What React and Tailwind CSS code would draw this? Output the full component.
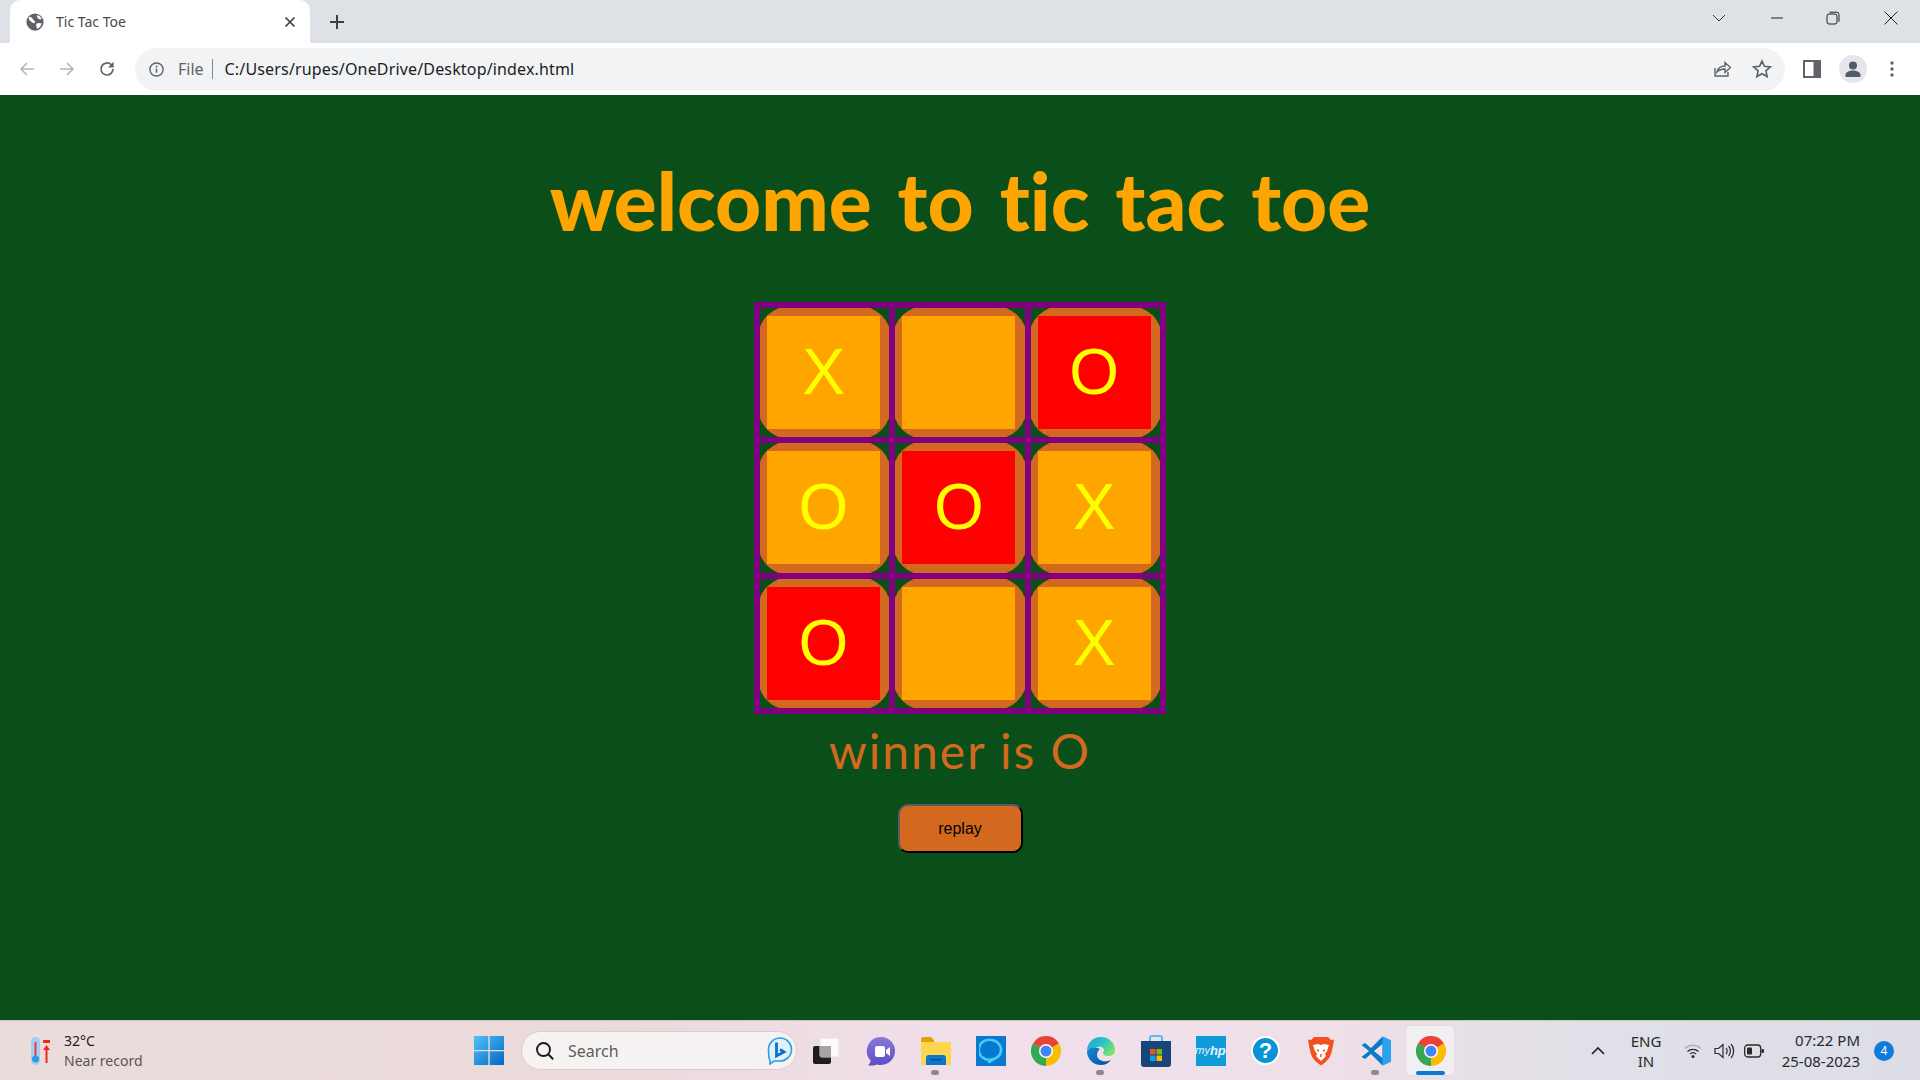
import React from "react";

const Cell = ({ v, red }) => (
  <div className="h-full w-full overflow-hidden bg-[#0a4f19]">
    <div className={"-m-[2px] flex h-[calc(100%+4px)] w-[calc(100%+4px)] items-center rounded-[32px] bg-[#d2691e] pl-[9px]"}>
      <div className={"flex h-[113px] w-[113px] items-center justify-center pb-[1px] font-['Liberation_Sans',sans-serif] text-[64px] leading-none text-[#ffff00] " + (red ? "bg-[#ff0000]" : "bg-[#ffa500]")}>
        {v}
      </div>
    </div>
  </div>
);

const Chrome = ({ s = 30 }) => (
  <svg className="relative" width={s} height={s} viewBox="0 0 24 24">
    <path d="M12 12L1.6 6A12 12 0 0 1 22.4 6Z" fill="#ea4335" />
    <path d="M12 12L22.4 6A12 12 0 0 1 12 24Z" fill="#fbbc05" />
    <path d="M12 12L12 24A12 12 0 0 1 1.6 6Z" fill="#34a853" />
    <circle cx="12" cy="12" r="5.6" fill="#fff" />
    <circle cx="12" cy="12" r="4.4" fill="#4285f4" />
  </svg>
);

const Slot = ({ children, dot, active }) => (
  <div className="relative flex h-[55px] w-[55px] shrink-0 items-center justify-center">
    {active && <div className="absolute left-[3px] top-[3px] h-[49px] w-[48px] rounded-[4px] bg-[#f1eff2] shadow-[0_0_1px_#bbb]" />}
    {children}
    {dot && <div className="absolute bottom-[3px] left-[23px] h-[5px] w-[8px] rounded-full bg-[#8a8a8f]" />}
    {active && <div className="absolute bottom-[3px] left-[13px] h-[4px] w-[29px] rounded-full bg-[#0a78d4]" />}
  </div>
);

export default function App() {
  return (
    <div className="flex h-[1080px] w-[1920px] flex-col overflow-hidden font-['Noto_Sans',sans-serif]">
      {/* tab strip */}
      <div className="flex h-[43px] shrink-0 items-end bg-[#dee1e6] pl-[10px]">
        <div className="flex h-[43px] w-[300px] items-center rounded-t-[10px] bg-white pl-[16px] pr-[12px]">
          <svg width="18" height="18" viewBox="0 0 24 24">
            <circle cx="12" cy="12" r="11.5" fill="#5f6368" />
            <path d="M4 5c3 0 4 1 5 3s3 2 3 4-2 2-3 1-3-2-4-3-2-3-1-5ZM15 3c2 0 5 2 6 5-2 1-4 0-5-1s-2-3-1-4ZM14 14c2-1 5-1 7 0-1 3-3 6-6 7-1-2-2-5-1-7Z" fill="#fff" />
          </svg>
          <span className="ml-[12px] text-[14px] text-[#45494d]">Tic Tac Toe</span>
          <svg className="ml-auto" width="16" height="16" viewBox="0 0 16 16">
            <path d="M3.5 3.5l9 9M12.5 3.5l-9 9" stroke="#3c4043" strokeWidth="1.7" />
          </svg>
        </div>
        <div className="ml-[19px] flex h-[43px] items-center">
          <svg width="16" height="16" viewBox="0 0 16 16">
            <path d="M8 1v14M1 8h14" stroke="#3c4043" strokeWidth="2" />
          </svg>
        </div>
        <div className="ml-auto flex h-[36px] items-center self-start">
          <svg className="mr-[44px]" width="14" height="14" viewBox="0 0 14 14"><path d="M1 4l6 6 6-6" fill="none" stroke="#3c4043" strokeWidth="1" /></svg>
          <svg className="mr-[42px]" width="14" height="14" viewBox="0 0 14 14"><path d="M1 7h12" stroke="#202124" strokeWidth="1" /></svg>
          <svg className="mr-[44px]" width="14" height="14" viewBox="0 0 14 14"><rect x="1" y="3" width="10" height="10" rx="2" fill="none" stroke="#202124" /><path d="M3.5 1.2h7a2.5 2.5 0 0 1 2.5 2.5v7" fill="none" stroke="#202124" /></svg>
          <svg className="mr-[22px]" width="14" height="14" viewBox="0 0 14 14"><path d="M.5.5l13 13M13.5.5l-13 13" stroke="#202124" strokeWidth="1" /></svg>
        </div>
      </div>
      {/* toolbar */}
      <div className="flex h-[52px] shrink-0 items-center bg-white">
        <svg className="ml-[18px]" width="18" height="18" viewBox="0 0 18 18"><path d="M16 9H3M9 3L3 9l6 6" fill="none" stroke="#b3b6ba" strokeWidth="1.6" /></svg>
        <svg className="ml-[22px]" width="18" height="18" viewBox="0 0 18 18"><path d="M2 9h13M9 3l6 6-6 6" fill="none" stroke="#b3b6ba" strokeWidth="1.6" /></svg>
        <svg className="ml-[22px]" width="18" height="18" viewBox="0 0 18 18"><path d="M15 9a6 6 0 1 1-1.8-4.3L15 6.5" fill="none" stroke="#5f6368" strokeWidth="1.7" /><path d="M15.6 1.8v5.6H10z" fill="#5f6368" /></svg>
        <div className="ml-[19px] flex h-[43px] w-[1650px] items-center rounded-full bg-[#f1f3f4] pl-[14px]">
          <svg width="15" height="15" viewBox="0 0 16 16"><circle cx="8" cy="8" r="7" fill="none" stroke="#5f6368" strokeWidth="1.5" /><path d="M8 7v4.5" stroke="#5f6368" strokeWidth="1.6" /><circle cx="8" cy="4.8" r="1" fill="#5f6368" /></svg>
          <span className="ml-[14px] text-[16px] text-[#5f6368]">File</span>
          <div className="ml-[8px] h-[20px] w-[1px] bg-[#80868b]" />
          <span className="ml-[12px] text-[16px] tracking-[0.16px] text-[#202124]">C:/Users/rupes/OneDrive/Desktop/index.html</span>
          <svg className="ml-auto" width="20" height="20" viewBox="0 0 20 20"><path d="M3 9v8h13v-4M5 13c1-4 4-6 8-6V3.5l5.5 5-5.5 5V10c-3 0-6 1-8 3Z" fill="none" stroke="#5f6368" strokeWidth="1.4" /></svg>
          <svg className="ml-[20px] mr-[13px]" width="20" height="20" viewBox="0 0 24 24"><path d="M12 2.5l2.9 6.3 6.9.8-5.1 4.7 1.4 6.8-6.1-3.4-6.1 3.4 1.4-6.8-5.1-4.7 6.9-.8Z" fill="none" stroke="#5f6368" strokeWidth="2" /></svg>
        </div>
        <svg className="ml-[18px]" width="18" height="18" viewBox="0 0 18 18"><rect x="0" y="0" width="18" height="18" fill="#5f6368" /><rect x="2" y="2" width="8.5" height="14" fill="#fff" /></svg>
        <div className="ml-[18px] flex h-[28px] w-[28px] items-center justify-center rounded-full bg-[#e4e6ea]">
          <svg width="18" height="18" viewBox="0 0 18 18"><circle cx="9" cy="5.5" r="4" fill="#515a6e" /><path d="M1.5 17v-2c0-3 4-4.5 7.500-4.500s7.500 1.500 7.500 4.500v2Z" fill="#515a6e" /></svg>
        </div>
        <svg className="ml-[22px]" width="6" height="18" viewBox="0 0 6 18"><circle cx="3" cy="3" r="1.700" fill="#5f6368" /><circle cx="3" cy="9" r="1.700" fill="#5f6368" /><circle cx="3" cy="15" r="1.700" fill="#5f6368" /></svg>
      </div>
      {/* page */}
      <main className="flex h-[925px] shrink-0 flex-col items-center bg-[#0a4f19]">
        <h1 className="mt-[59px] h-[92px] text-center font-['Lato',sans-serif] text-[80px] font-black leading-[92px] text-[#ffa500] [font-variant-ligatures:none] [word-spacing:7px]">welcome to tic tac toe</h1>
        <div className="mt-[56px] grid h-[412px] w-[412px] grid-cols-3 grid-rows-3 gap-[6px] border-[6px] border-[#800080] bg-[#800080]">
          <Cell v="X" />
          <Cell v="" />
          <Cell v="O" red />
          <Cell v="O" />
          <Cell v="O" red />
          <Cell v="X" />
          <Cell v="O" red />
          <Cell v="" />
          <Cell v="X" />
        </div>
        <div className="mt-[9px] h-[56px] font-['Lato',sans-serif] text-[48px] leading-[56px] tracking-[2px] text-[#d2691e]">winner is O</div>
        <button className="mt-[25px] h-[49px] w-[125px] rounded-[10px] border-2 border-b-black border-l-[#5a5a64] border-r-black border-t-[#5a5a64] bg-[#d2691e] font-['Liberation_Sans',sans-serif] text-[16px] text-black">replay</button>
      </main>
      {/* taskbar */}
      <footer className="flex h-[60px] shrink-0 items-center border-t border-t-[#c9c5c5] bg-[linear-gradient(90deg,#ebdcdc_0%,#eadada_30%,#f1e0ec_52%,#eedfe8_70%,#dfe0e8_85%,#dcdde6_100%)]">
        <svg className="ml-[30px]" width="22" height="30" viewBox="0 0 22 30">
          <rect x="1" y="1" width="9" height="28" rx="4.500" fill="#a5cdf0" />
          <rect x="4.600" y="6" width="1.800" height="14" fill="#e8342a" />
          <circle cx="5.500" cy="23" r="3.500" fill="#2f9be8" />
          <rect x="13" y="4" width="7" height="3" fill="#f0291c" />
          <path d="M16.500 9l3.500 5h-2.500v13h-2V14H13Z" fill="#f0291c" />
        </svg>
        <div className="ml-[12px] w-[100px] text-[14px] leading-[20px]">
          <div className="text-[#1d1d1d]">32°C</div>
          <div className="text-[#555]">Near record</div>
        </div>
        <svg className="ml-[310px]" width="30" height="29" viewBox="0 0 30 29">
          <defs><linearGradient id="w" x1="0" y1="0" x2="1" y2="1"><stop offset="0" stopColor="#4fc3f7" /><stop offset="1" stopColor="#0566c4" /></linearGradient></defs>
          <path d="M0 0h14.300v14H0zM15.700 0H30v14H15.700zM0 15.300h14.300V29H0zM15.700 15.300H30V29H15.700z" fill="url(#w)" />
        </svg>
        <div className="ml-[17px] flex h-[39px] w-[276px] items-center rounded-full border border-[#d8ccd0] bg-[#f7f2f2] pl-[13px]">
          <svg width="20" height="20" viewBox="0 0 20 20"><circle cx="8.500" cy="8.500" r="6.500" fill="none" stroke="#1a1a1a" strokeWidth="1.900" /><path d="M13.200 13.200l5 5" stroke="#1a1a1a" strokeWidth="2" /></svg>
          <span className="ml-[13px] text-[16px] text-[#5c5c5c]">Search</span>
          <svg className="ml-auto mr-[3px]" width="26" height="30" viewBox="0 0 26 30">
            <path d="M13 2a11.500 11.500 0 0 1 0 23H7l-4 3v-3.500C1.500 22 1.500 18 1.500 13.500A11.500 11.500 0 0 1 13 2Z" fill="#dff2fb" stroke="#2b9be8" strokeWidth="1.600" />
            <path d="M9.500 6.500v13.500l7.500-4-4-2.500" fill="none" stroke="#0a6fd0" strokeWidth="2.800" />
          </svg>
        </div>
        <div className="ml-[-2px] flex items-center pl-[3px]">
          <Slot>
            <svg width="28" height="28" viewBox="0 0 28 28">
              <rect x="1" y="9" width="18" height="18" rx="2" fill="#1d1d1d" />
              <rect x="8" y="1" width="19" height="19" rx="1.500" fill="#ffffff" fillOpacity="0.85" stroke="#e6e0e4" />
              <rect x="8" y="9" width="11" height="11" fill="#a5a5a5" />
            </svg>
          </Slot>
          <Slot>
            <svg width="30" height="30" viewBox="0 0 30 30">
              <defs><linearGradient id="m" x1="0" y1="0" x2="0" y2="1"><stop offset="0" stopColor="#8b78d8" /><stop offset="1" stopColor="#5a4fc8" /></linearGradient></defs>
              <path d="M15 1a14 14 0 1 1-4 27.400C8 29.500 5 29.800 2 29.500c1.500-1.500 2.400-3 2.600-5A14 14 0 0 1 15 1Z" fill="url(#m)" />
              <rect x="9" y="10" width="10" height="11" rx="2" fill="#fff" />
              <path d="M20 14l4-3v9l-4-3Z" fill="#fff" />
            </svg>
          </Slot>
          <Slot dot>
            <svg width="30" height="30" viewBox="0 0 30 30">
              <path d="M0 3a2 2 0 0 1 2-2h8l3 3v4H0Z" fill="#e0a10d" />
              <path d="M0 6h30v22a1 1 0 0 1-1 1H1a1 1 0 0 1-1-1Z" fill="#fdd64e" />
              <path d="M5 22a3 3 0 0 1 3-3h14a3 3 0 0 1 3 3v7H5Z" fill="#0b76c8" />
              <rect x="10" y="23" width="10" height="1.500" fill="#0a4a80" />
            </svg>
          </Slot>
          <Slot>
            <div className="flex h-[30px] w-[30px] items-center justify-center bg-[#0a78d0]">
              <svg width="24" height="26" viewBox="0 0 24 26">
                <path d="M12 2a10 10 0 1 0 0 19.500L9.500 24.500 16 20.500C20 19 22 15.500 22 12A10 10 0 0 0 12 2Z" fill="none" stroke="#3fd0f5" strokeWidth="2.600" />
              </svg>
            </div>
          </Slot>
          <Slot><Chrome /></Slot>
          <Slot dot>
            <svg width="30" height="30" viewBox="0 0 30 30">
              <defs>
                <linearGradient id="e" x1="0" y1="0" x2="1" y2="0.600"><stop offset="0" stopColor="#1a9fe0" /><stop offset="0.600" stopColor="#2fc8c0" /><stop offset="1" stopColor="#7fe06a" /></linearGradient>
                <linearGradient id="e2" x1="0" y1="0" x2="1" y2="1"><stop offset="0" stopColor="#1688d8" /><stop offset="1" stopColor="#0c4f98" /></linearGradient>
              </defs>
              <path d="M1 15C1 7 7 1 15 1c8 0 14 6 14 13 0 4-3 6-7 6-3 0-5-1-5-3 0-1 1-1.500 1-3 0-2-3-4-6-3-5 0-10 1-11 4Z" fill="url(#e)" />
              <path d="M1 15c0 8 6 14 14 14 4 0 8-2 10-5-3 1.500-8 2-11 0-4-2-4-8 0-11C9 10 3 11 1 15Z" fill="url(#e2)" />
            </svg>
          </Slot>
          <Slot>
            <svg width="30" height="32" viewBox="0 0 30 32">
              <path d="M9 6V3a2 2 0 0 1 2-2h8a2 2 0 0 1 2 2v3" fill="none" stroke="#28b8f0" strokeWidth="1.600" />
              <path d="M0 6h30v23a3 3 0 0 1-3 3H3a3 3 0 0 1-3-3Z" fill="#17457c" />
              <rect x="9" y="14" width="5.500" height="5.500" fill="#f25022" />
              <rect x="15.500" y="14" width="5.500" height="5.500" fill="#7fba00" />
              <rect x="9" y="20.500" width="5.500" height="5.500" fill="#00a4ef" />
              <rect x="15.500" y="20.500" width="5.500" height="5.500" fill="#ffb900" />
            </svg>
          </Slot>
          <Slot>
            <div className="flex h-[30px] w-[30px] items-center justify-center bg-[#0f9bd7] font-['Liberation_Sans',sans-serif] text-[11px] italic text-[#e8f6fc]">
              my<span className="text-[13px] font-bold">hp</span>
            </div>
          </Slot>
          <Slot>
            <div className="flex h-[29px] w-[29px] items-center justify-center rounded-full border-2 border-white bg-[#0a92d6] font-['Liberation_Sans',sans-serif] text-[22px] font-bold text-white">?</div>
          </Slot>
          <Slot>
            <svg width="26" height="30" viewBox="0 0 26 30">
              <path d="M6 1h14l3 3 3-.500-1 6-1 5c-1 5-3 9-7 12l-4 3-4-3c-4-3-6-7-7-12L1 9.500 0 3.500 3 4Z" fill="#f1501f" />
              <path d="M5 9l5-1 3 1 3-1 5 1-2 6-2 3 1 2-5 5-5-5 1-2-2-3Z" fill="#fff" />
              <path d="M9 14l2 1M17 14l-2 1M13 18v3" stroke="#f1501f" strokeWidth="1.500" />
            </svg>
          </Slot>
          <Slot dot>
            <svg width="30" height="30" viewBox="0 0 30 30">
              <path d="M21.500 0.500L30 4.500v21l-8.500 4L10 18l-6 5L0.500 21 8 15 0.500 9 4 7l6 5Z" fill="#0a7bc8" />
              <path d="M21.500 8L13 15l8.500 7Z" fill="#f0e2e8" />
              <path d="M21.500 0.500L30 4.500v21l-8.500 4Z" fill="#2aa3ee" />
            </svg>
          </Slot>
          <Slot active><Chrome /></Slot>
        </div>
        <svg className="ml-[133px]" width="14" height="9" viewBox="0 0 14 9"><path d="M1 8l6-6 6 6" fill="none" stroke="#202020" strokeWidth="1.600" /></svg>
        <div className="ml-[21px] w-[40px] text-center text-[15px] leading-[20px] text-[#2a2a2a]">
          <div>ENG</div>
          <div>IN</div>
        </div>
        <svg className="ml-[18px]" width="18" height="16" viewBox="0 0 18 16">
          <path d="M1 5.500a11.500 11.500 0 0 1 16 0" fill="none" stroke="#b0b0b6" strokeWidth="1.300" />
          <path d="M3.500 8.500a8 8 0 0 1 11 0M6 11a4.500 4.500 0 0 1 6 0" fill="none" stroke="#2a2a2a" strokeWidth="1.300" />
          <circle cx="9" cy="13.500" r="1.500" fill="#2a2a2a" />
        </svg>
        <svg className="ml-[12px]" width="21" height="18" viewBox="0 0 21 18">
          <path d="M1 6.500h3.500L9 2.500v13l-4.500-4H1Z" fill="none" stroke="#2a2a2a" strokeWidth="1.200" />
          <path d="M12 6c1.500 1.500 1.500 4.500 0 6M14.500 4c2.500 2.500 2.500 7.500 0 10M17 2c3.500 3.500 3.500 10.500 0 14" fill="none" stroke="#2a2a2a" strokeWidth="1.200" />
        </svg>
        <svg className="ml-[9px]" width="20" height="14" viewBox="0 0 20 14">
          <rect x="0.700" y="1" width="16" height="12" rx="3" fill="none" stroke="#2a2a2a" strokeWidth="1.300" />
          <rect x="3" y="3.500" width="5" height="7" rx="1" fill="#2a2a2a" />
          <rect x="17.500" y="5" width="2.500" height="4" rx="1" fill="#2a2a2a" />
        </svg>
        <div className="ml-[4px] w-[92px] text-right text-[15px] leading-[21px] text-[#2a2a2a]">
          <div>07:22 PM</div>
          <div>25-08-2023</div>
        </div>
        <div className="ml-[14px] flex h-[20px] w-[20px] items-center justify-center rounded-full bg-[#0f7bd8] text-[12px] text-white">4</div>
      </footer>
    </div>
  );
}
